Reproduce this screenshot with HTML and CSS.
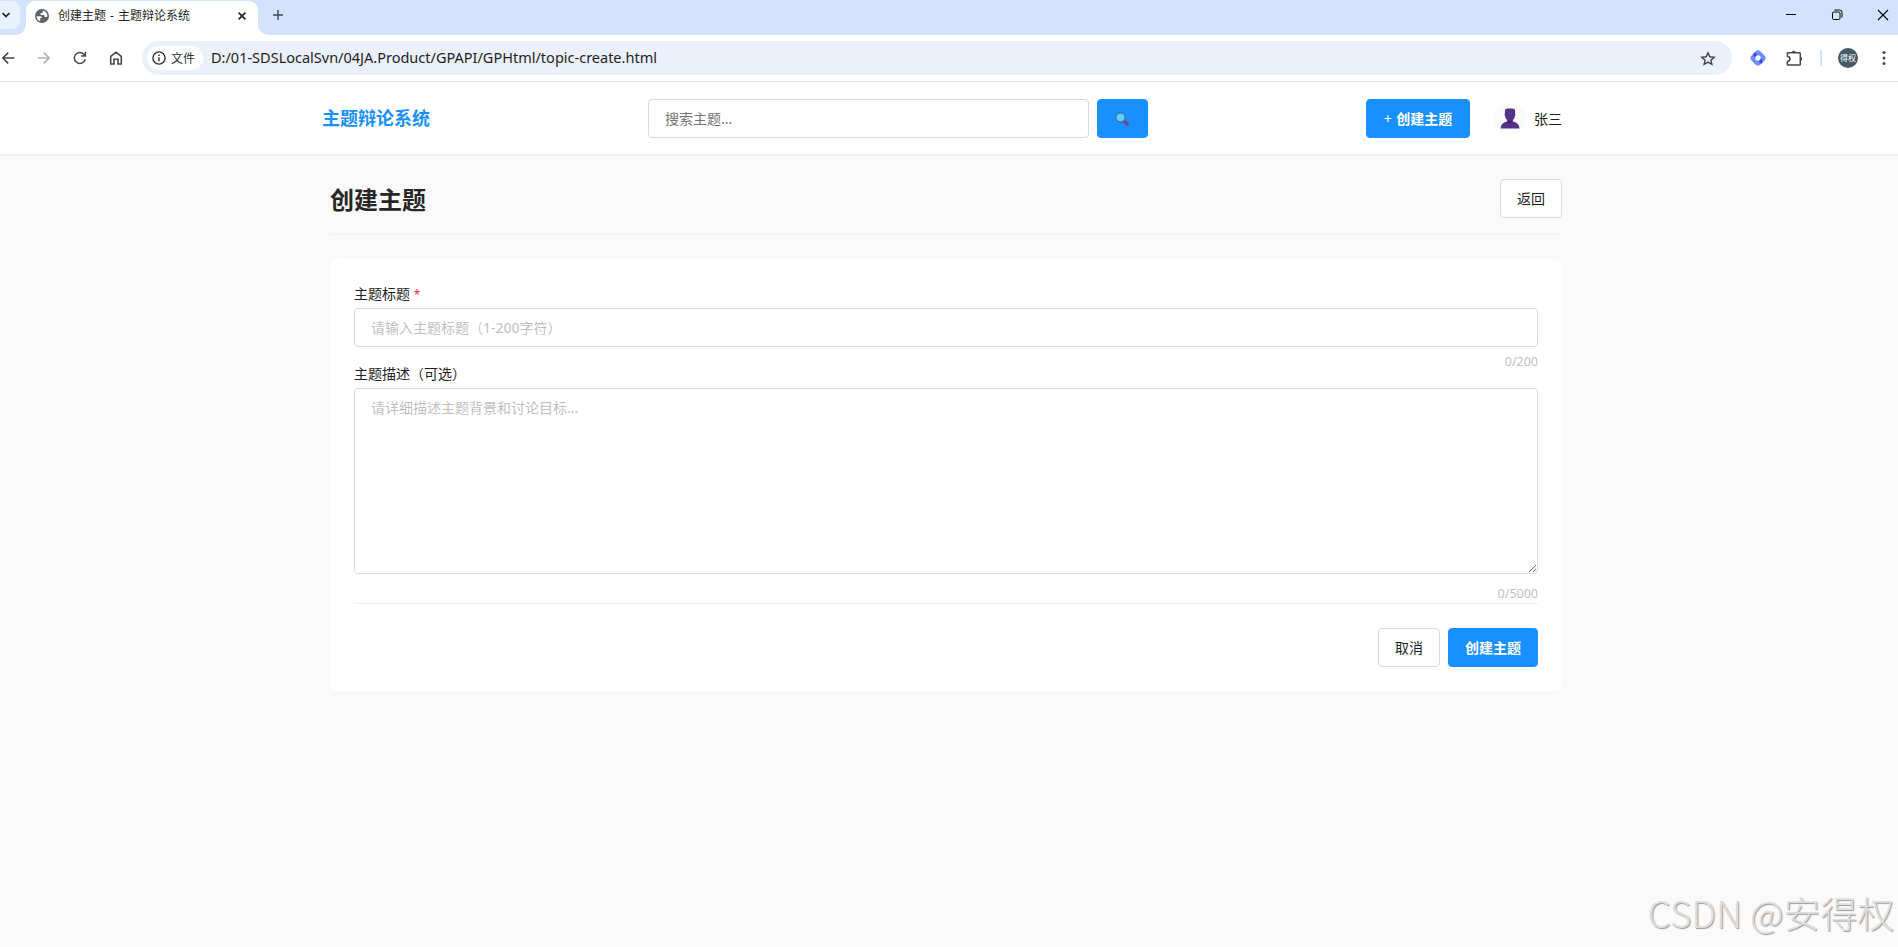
FILE: index.html
```html
<!DOCTYPE html>
<html lang="zh-CN">
<head>
    <meta charset="UTF-8">
    <meta name="viewport" content="width=device-width, initial-scale=1.0">
    <title>创建主题 - 主题辩论系统</title>
    <link rel="stylesheet" href="styles.css">
</head>
<body>
    <!-- Browser window -->
    <div class="tab-strip">
        <div class="tab-search">
            <svg width="10" height="8" viewBox="0 0 10 8"><path d="M1.5 2 L5 5.5 L8.5 2" fill="none" stroke="#1f1f1f" stroke-width="1.7"/></svg>
        </div>
        <div class="tab">
            <svg class="tab-icon" width="14" height="14" viewBox="0 0 14 14">
                <circle cx="7" cy="7" r="7" fill="#5f6368"/>
                <path d="M1.5 7.2 H5.2 Q7.2 7.4 7 9 H5.2 V12.2 Q1.8 11.2 1.5 7.2 Z M7.8 1.5 V3 Q7.6 4.4 5.6 4.3 V6 H8.6 Q9.6 6.1 9.6 8 H11.2 Q12.2 8 12.4 7 Q12.3 2.5 7.8 1.5 Z" fill="#fff"/>
            </svg>
            <span class="tab-title">创建主题 - 主题辩论系统</span>
            <svg width="8" height="8" viewBox="0 0 8 8"><path d="M0.6 0.6 L7.4 7.4 M7.4 0.6 L0.6 7.4" stroke="#1f1f1f" stroke-width="1.6"/></svg>
        </div>
        <svg class="new-tab" width="10" height="10" viewBox="0 0 10 10"><path d="M5 0 V10 M0 5 H10" stroke="#474747" stroke-width="1.4"/></svg>
        <div class="window-controls">
            <svg width="12" height="12" viewBox="0 0 12 12"><path d="M1 5.5 H11" stroke="#000"/></svg>
            <svg width="12" height="12" viewBox="0 0 12 12"><rect x="1.5" y="3" width="7.5" height="7.5" rx="1.2" fill="none" stroke="#000"/><path d="M3.5 1 H8.6 Q11 1 11 3.4 V8.5" fill="none" stroke="#000"/></svg>
            <svg width="12" height="12" viewBox="0 0 12 12"><path d="M1 1 L11 11 M11 1 L1 11" stroke="#000" stroke-width="1.1"/></svg>
        </div>
    </div>
    <div class="toolbar">
        <div class="nav-icons">
            <svg width="14" height="14" viewBox="0 0 14 14"><path d="M13.3 7 H2 M7.2 1.6 L1.8 7 L7.2 12.4" fill="none" stroke="#474747" stroke-width="1.6"/></svg>
            <svg width="14" height="14" viewBox="0 0 14 14"><path d="M0.7 7 H12 M6.8 1.6 L12.2 7 L6.8 12.4" fill="none" stroke="#b0b0b0" stroke-width="1.6"/></svg>
            <svg width="14" height="14" viewBox="0 0 14 14"><path d="M12.2 8.2 A5.5 5.5 0 1 1 11 3.3 L12.3 4.6 M12.4 0.8 V5 H8.2" fill="none" stroke="#474747" stroke-width="1.5"/></svg>
            <svg width="14" height="14" viewBox="0 0 14 14"><path d="M1.7 5.3 L7 1.2 L12.3 5.3 V13 H9 V8.2 H5 V13 H1.7 Z" fill="none" stroke="#474747" stroke-width="1.6"/></svg>
        </div>
        <div class="address-bar">
            <div class="file-chip">
                <svg width="14" height="14" viewBox="0 0 14 14"><circle cx="7" cy="7" r="6.1" fill="none" stroke="#303030" stroke-width="1.4"/><path d="M7 6.2 V10.3 M7 3.5 V5" stroke="#303030" stroke-width="1.4"/></svg>
                <span>文件</span>
            </div>
            <span class="url">D:/01-SDSLocalSvn/04JA.Product/GPAPI/GPHtml/topic-create.html</span>
            <svg class="star" width="16" height="15" viewBox="0 0 16 15"><path d="M8 1.7 L9.8 5.8 L14.2 6.2 L10.9 9.1 L11.9 13.4 L8 11.1 L4.1 13.4 L5.1 9.1 L1.8 6.2 L6.2 5.8 Z" fill="none" stroke="#474747" stroke-width="1.4"/></svg>
        </div>
        <svg class="ext-logo" width="16" height="16" viewBox="0 0 16 16">
            <rect x="1.6" y="1.6" width="12.8" height="12.8" rx="4" transform="rotate(45 8 8)" fill="#6a90ff"/>
            <path d="M4.2 2.6 Q2.6 4.5 4 6.5 L5.6 8.6 Q5 5.6 8 5.2 L5.8 3.2 Q5 2.6 4.2 2.6 Z M11.8 13.4 Q13.4 11.5 12 9.5 L10.4 7.4 Q11 10.4 8 10.8 L10.2 12.8 Q11 13.4 11.8 13.4 Z" fill="#4a3bee"/>
            <circle cx="8" cy="8" r="2.7" fill="#fff"/>
        </svg>
        <svg class="ext-puzzle" width="17" height="17" viewBox="0 0 17 17"><path d="M2 2.7 H13.5 Q14.3 2.7 14.3 3.5 V14.2 Q14.3 15 13.5 15 H2 Q1.4 15 1.4 14.4 V11.4 Q4 10.7 4 8.9 Q4 7 1.4 6.3 V3.3 Q1.4 2.7 2 2.7 Z" fill="none" stroke="#474747" stroke-width="1.5"/><path d="M5.7 2.5 A2.2 2.2 0 0 1 10 2.5 Z M14.5 6.7 A2.2 2.2 0 0 1 14.5 11 Z" fill="#474747"/></svg>
        <span class="divider"></span>
        <span class="profile">得权</span>
        <svg class="menu-dots" width="4" height="14" viewBox="0 0 4 14"><circle cx="2" cy="1.6" r="1.5" fill="#474747"/><circle cx="2" cy="7" r="1.5" fill="#474747"/><circle cx="2" cy="12.4" r="1.5" fill="#474747"/></svg>
    </div>

    <!-- Page -->
    <header class="header">
        <div class="header-inner">
            <div class="logo">主题辩论系统</div>
            <div class="search">
                <input type="text" class="search-input" placeholder="搜索主题...">
                <button class="btn btn-primary btn-search" aria-label="搜索">
                    <svg width="14" height="14" viewBox="0 0 14 14">
                        <path d="M8.6 8.6 L12.4 12.2" stroke="#80407c" stroke-width="3" stroke-linecap="round"/>
                        <circle cx="5.5" cy="5.5" r="4.6" fill="#5fcdec" stroke="#3c5daa"/>
                    </svg>
                </button>
            </div>
            <div class="user-area">
                <button class="btn btn-primary btn-new"><span class="plus">+</span> 创建主题</button>
                <div class="avatar">
                    <svg width="20" height="21" viewBox="0 0 20 21">
                        <path d="M0.6 20.5 Q0.8 14.5 7.6 13.3 H12.4 Q19.2 14.5 19.4 20.5 Z" fill="#533186"/>
                        <path d="M7.2 10 H12.8 V14 Q10 15.8 7.2 14 Z" fill="#3d2369"/>
                        <path d="M4.9 3 Q5 0.6 8 0.6 H12 Q15 0.6 15.1 3 V5.5 Q16 6.5 15 8 Q14.2 12.6 10 12.8 Q5.8 12.6 5 8 Q4 6.5 4.9 5.5 Z" fill="#533186"/>
                    </svg>
                </div>
                <span class="username">张三</span>
            </div>
        </div>
    </header>
    <main class="container">
        <div class="page-header">
            <h1>创建主题</h1>
            <button class="btn">返回</button>
        </div>
        <form class="card">
            <div class="form-group">
                <label for="title">主题标题 <span class="required">*</span></label>
                <input type="text" id="title" placeholder="请输入主题标题（1-200字符）">
                <div class="char-count">0/200</div>
            </div>
            <div class="form-group">
                <label for="description">主题描述（可选）</label>
                <textarea id="description" placeholder="请详细描述主题背景和讨论目标..."></textarea>
                <div class="char-count count-desc">0/5000</div>
            </div>
            <div class="form-actions">
                <button type="button" class="btn">取消</button>
                <button type="button" class="btn btn-primary">创建主题</button>
            </div>
        </form>
    </main>
    <div class="watermark">CSDN @安得权</div>
</body>
</html>
```
FILE: styles.css
```css
* {
    box-sizing: border-box;
    margin: 0;
    padding: 0;
}
body {
    font-family: "Noto Sans", "Noto Sans CJK SC", sans-serif;
    font-size: 14px;
    color: #1f1f1f;
    background-color: #fafafa;
    height: 947px;
    overflow: hidden;
}
svg {
    display: block;
    flex-shrink: 0;
}

/* browser window */
.tab-strip {
    display: flex;
    height: 35px;
    background-color: #d3e3fd;
}
.tab-search {
    width: 20px;
    height: 28px;
    margin-top: 1px;
    padding: 10px 0 0 1px;
    background-color: #e9f0fe;
    border-radius: 0 8px 8px 0;
}
.tab {
    position: relative;
    display: flex;
    align-items: center;
    width: 232px;
    height: 34px;
    margin: 1px 0 0 6px;
    padding: 0 12px 5px 9px;
    background-color: #fff;
    border-radius: 9px 9px 0 0;
}
.tab::before,
.tab::after {
    content: "";
    position: absolute;
    bottom: 0;
    width: 10px;
    height: 10px;
}
.tab::before {
    left: -10px;
    background: radial-gradient(circle at 0 0, transparent 9.5px, #fff 10px);
}
.tab::after {
    right: -10px;
    background: radial-gradient(circle at 100% 0, transparent 9.5px, #fff 10px);
}
.tab-title {
    flex: 1;
    margin-left: 9px;
    font-size: 12px;
    line-height: 18px;
    word-spacing: 1px;
    color: #1f1f1f;
}
.new-tab {
    margin: 10px 0 0 15px;
}
.window-controls {
    display: flex;
    gap: 34px;
    margin: 9px 9px 0 auto;
}
.toolbar {
    display: flex;
    align-items: center;
    height: 47px;
    padding: 0 12px 0 1px;
    background-color: #fff;
    border-bottom: 1px solid #dfe1e3;
}
.nav-icons {
    display: flex;
    gap: 22px;
}
.address-bar {
    display: flex;
    align-items: center;
    width: 1591px;
    height: 34px;
    margin-left: 19px;
    padding: 0 16px 0 5px;
    background-color: #ebf0fa;
    border-radius: 17px;
}
.file-chip {
    display: flex;
    align-items: center;
    gap: 5px;
    width: 56px;
    height: 24px;
    padding-left: 5px;
    font-size: 12px;
    color: #303030;
    background-color: #fff;
    border-radius: 12px;
}
.url {
    margin-left: 8px;
    padding-bottom: 2px;
    font-size: 14.5px;
    color: #1f1f1f;
}
.star {
    margin-left: auto;
}
.ext-logo {
    margin-left: 18px;
}
.ext-puzzle {
    margin-left: 20px;
}
.divider {
    width: 2px;
    height: 16px;
    margin-left: 17px;
    background-color: #d3e3fd;
}
.profile {
    width: 20px;
    height: 20px;
    margin-left: 16px;
    font-size: 8px;
    line-height: 20px;
    text-align: center;
    color: #fff;
    background-color: #455a64;
    border-radius: 50%;
}
.menu-dots {
    margin-left: 24px;
}

/* header */
.header {
    position: relative;
    height: 72px;
    background-color: #fff;
    box-shadow: 0 2px 1px rgba(0, 0, 0, 0.04);
}
.header-inner {
    display: flex;
    align-items: center;
    justify-content: space-between;
    width: 1240px;
    height: 72px;
    margin-left: 322px;
    padding-top: 1px;
}
.logo {
    width: 326px;
    padding-bottom: 3px;
    font-size: 18px;
    font-weight: bold;
    color: #1890ff;
}
.search {
    display: flex;
    gap: 8px;
    width: 500px;
}
.btn {
    height: 39px;
    padding: 0 16px 2px;
    font-family: inherit;
    font-size: 14px;
    color: #1f1f1f;
    background-color: #fff;
    border: 1px solid #d9d9d9;
    border-radius: 4px;
    cursor: pointer;
}
.btn-primary {
    font-weight: bold;
    color: #fff;
    background-color: #1890ff;
    border-color: #1890ff;
}
.btn-search {
    width: 51px;
    padding: 0 0 0 17px;
}
.btn-new {
    width: 104px;
}
.plus {
    margin-right: 1px;
    font-weight: normal;
}
.user-area {
    display: flex;
    align-items: center;
    margin-left: auto;
}
.avatar {
    display: flex;
    align-items: center;
    justify-content: center;
    width: 32px;
    height: 32px;
    margin: 0 8px 0 24px;
    background-color: #fafafa;
    border-radius: 50%;
}
.username {
    padding-bottom: 2px;
}
input,
textarea {
    display: block;
    width: 100%;
    height: 39px;
    padding: 8px 16px;
    font-family: inherit;
    font-size: 14px;
    background-color: #fff;
    border: 1px solid #d9d9d9;
    border-radius: 4px;
}
textarea {
    height: 186px;
    line-height: 21px;
    resize: vertical;
}
input::placeholder,
textarea::placeholder {
    color: #bfbfbf;
}
.search-input {
    width: 441px;
}
.search-input::placeholder {
    color: #757575;
}

/* create form */
.container {
    width: 1232px;
    margin-left: 330px;
    padding-top: 25px;
}
.page-header {
    display: flex;
    justify-content: space-between;
    height: 56px;
    margin-bottom: 24px;
    border-bottom: 1px solid #f0f0f0;
}
.page-header h1 {
    font-size: 24px;
    line-height: 42px;
    color: #262626;
}
.card {
    height: 432px;
    padding: 24px;
    background-color: #fff;
    border-radius: 8px;
}
.form-group label {
    display: block;
    height: 25px;
    line-height: 22px;
}
.required {
    font-size: 12px;
    color: #ff2d30;
}
.char-count {
    height: 16px;
    padding-top: 5px;
    font-size: 12.5px;
    line-height: 20px;
    text-align: right;
    color: #bfbfbf;
}
.count-desc {
    height: 29px;
    padding-top: 10px;
}
.form-actions {
    display: flex;
    justify-content: flex-end;
    gap: 8px;
    padding-top: 24px;
    border-top: 1px solid #f0f0f0;
}
.watermark {
    position: absolute;
    right: 4px;
    bottom: 9px;
    font-family: "Noto Sans CJK SC", sans-serif;
    font-size: 36.8px;
    font-weight: 300;
    line-height: 52px;
    color: #dedede;
    text-shadow: 1px 1px 1px #999;
}
```
